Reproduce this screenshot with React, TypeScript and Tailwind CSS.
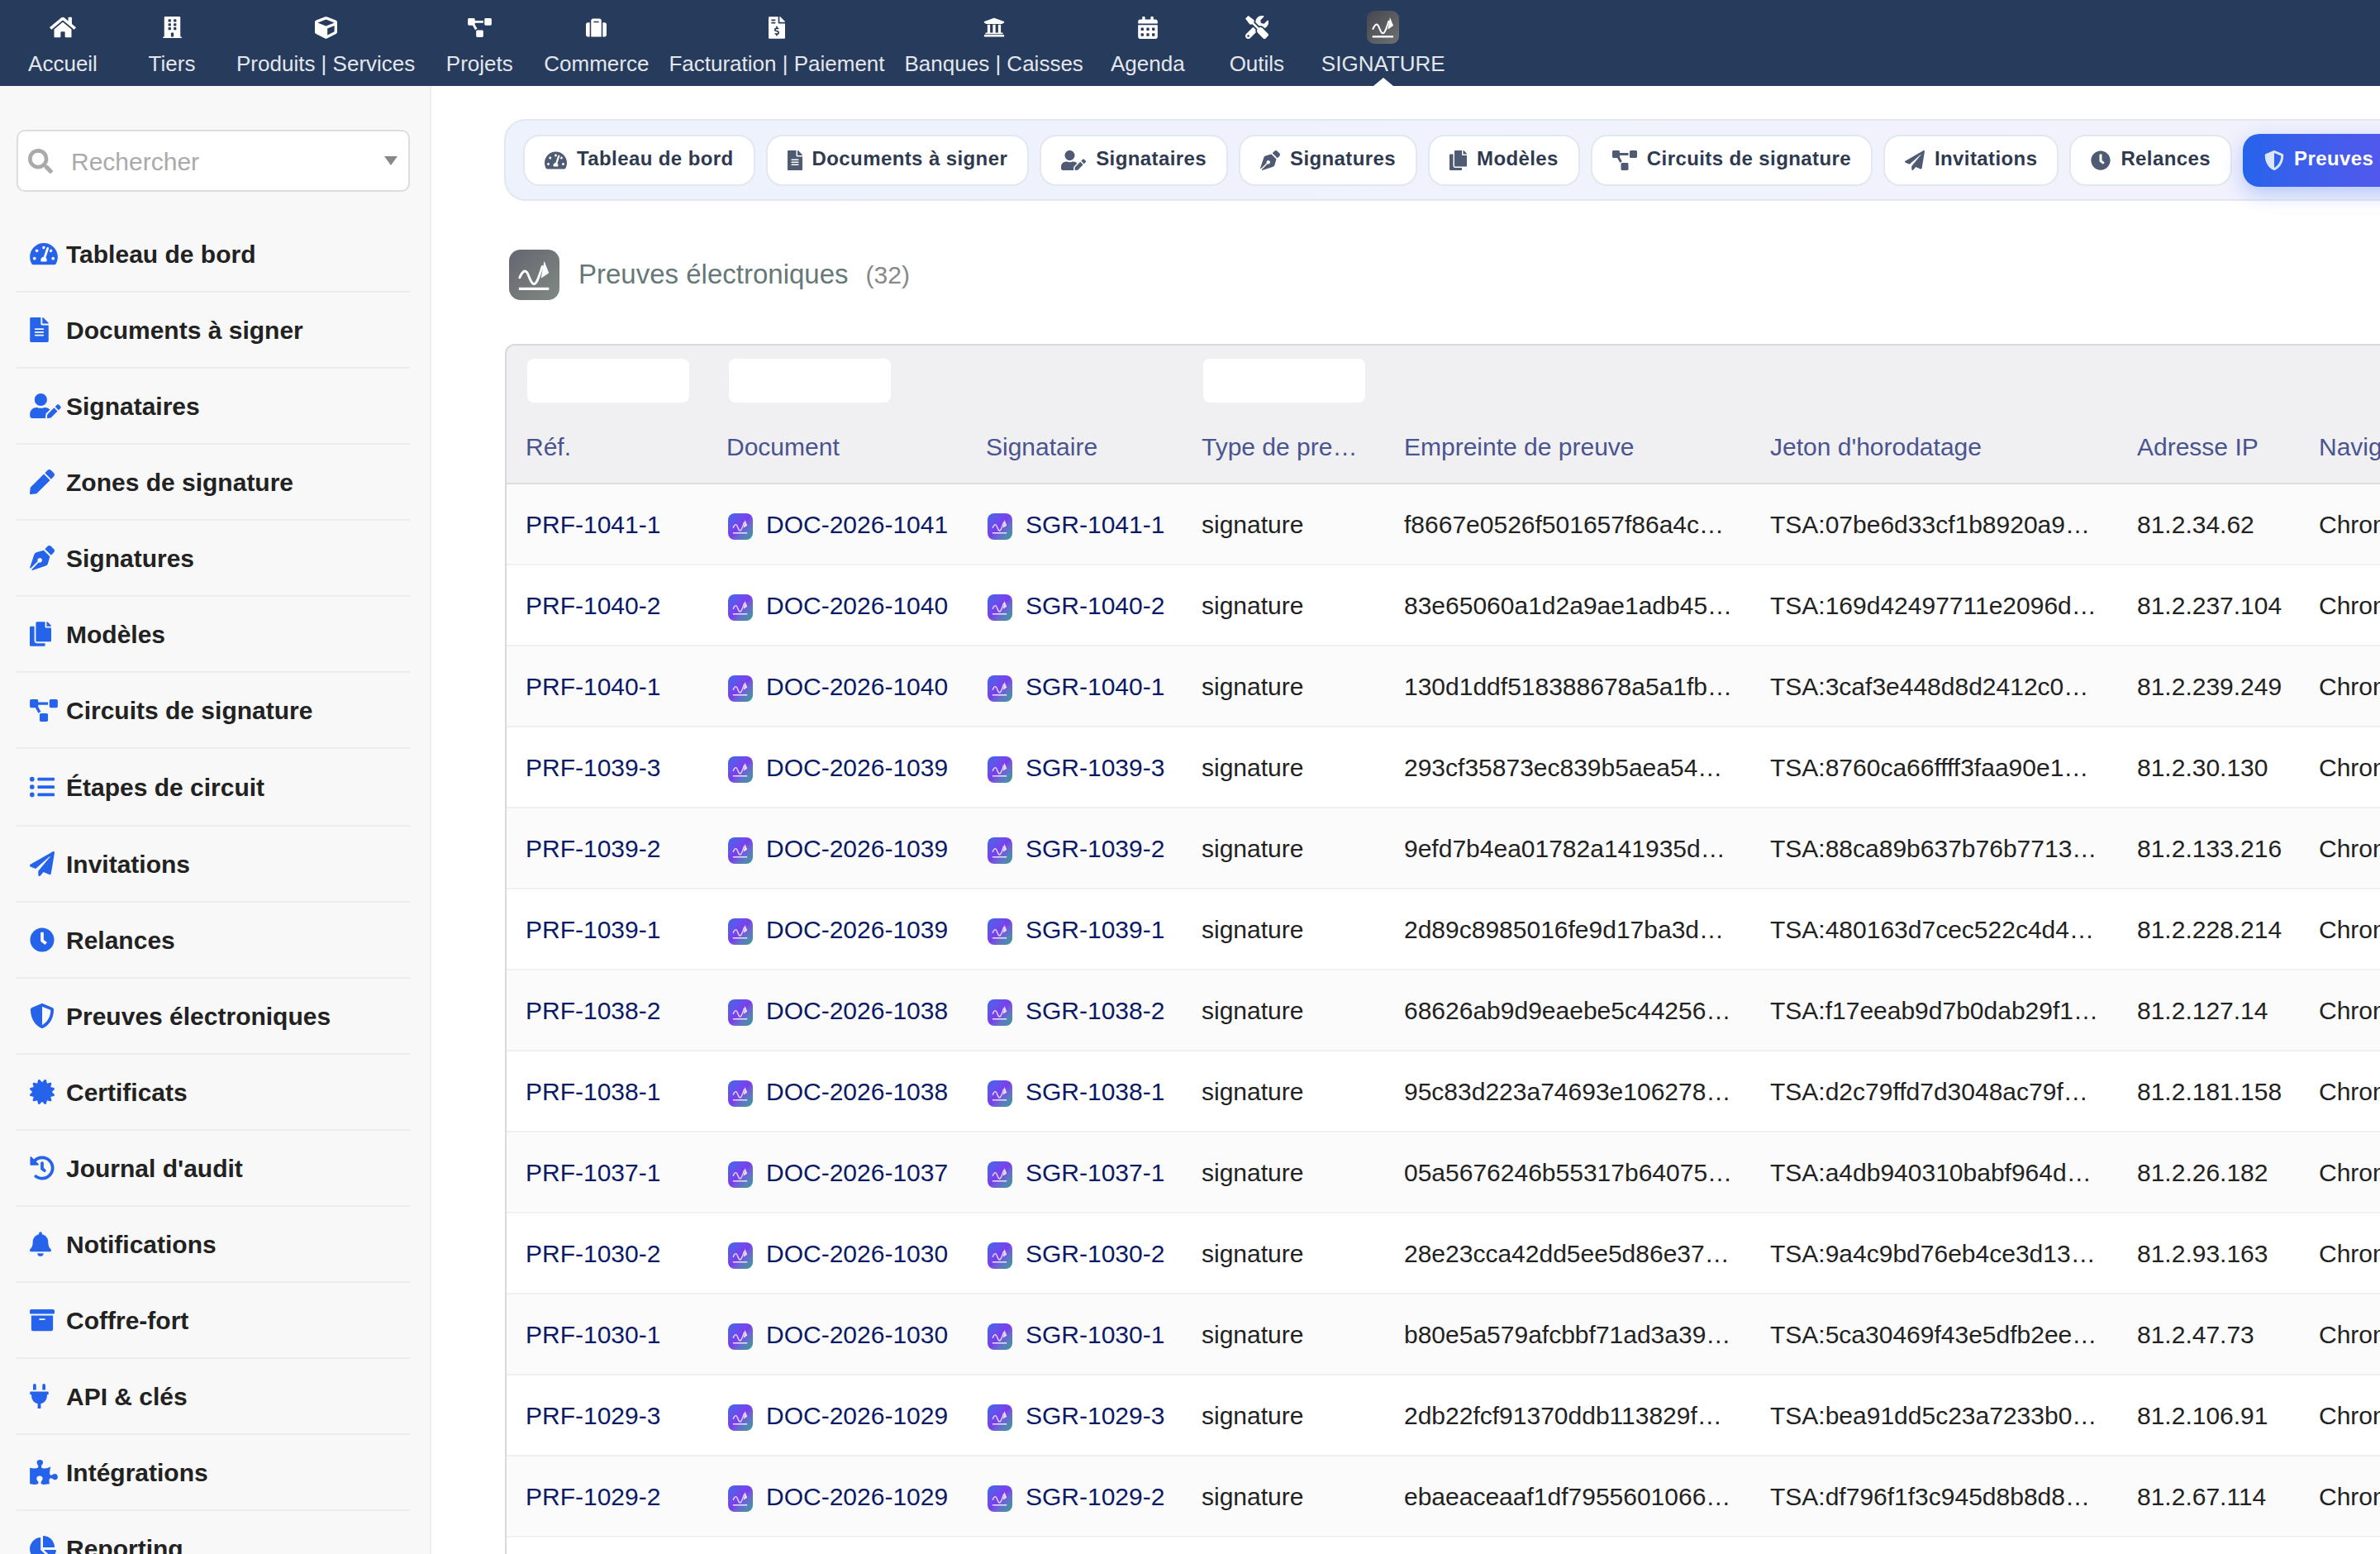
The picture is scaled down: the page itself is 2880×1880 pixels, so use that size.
import React from 'react';
import type { IconType } from 'react-icons';
import {
  FaArchive,
  FaBell,
  FaBuilding,
  FaCalendarAlt,
  FaCertificate,
  FaChartPie,
  FaClock,
  FaCopy,
  FaCube,
  FaFileAlt,
  FaFileInvoiceDollar,
  FaHistory,
  FaHome,
  FaListUl,
  FaPaperPlane,
  FaPen,
  FaPenNib,
  FaPlug,
  FaProjectDiagram,
  FaPuzzlePiece,
  FaSearch,
  FaShieldAlt,
  FaSuitcase,
  FaTachometerAlt,
  FaTools,
  FaUniversity,
  FaUserEdit,
} from 'react-icons/fa';

const topMenu: { label: string; icon: IconType; size: string }[] = [
  { label: 'Accueil', icon: FaHome, size: 'h-[28px] w-[32px]' },
  { label: 'Tiers', icon: FaBuilding, size: 'h-[26px] w-[23px]' },
  { label: 'Produits | Services', icon: FaCube, size: 'h-[27px] w-[27px]' },
  { label: 'Projets', icon: FaProjectDiagram, size: 'h-[23px] w-[29px]' },
  { label: 'Commerce', icon: FaSuitcase, size: 'h-[25px] w-[25px]' },
  { label: 'Facturation | Paiement', icon: FaFileInvoiceDollar, size: 'h-[27px] w-[20px]' },
  { label: 'Banques | Caisses', icon: FaUniversity, size: 'h-[26px] w-[26px]' },
  { label: 'Agenda', icon: FaCalendarAlt, size: 'h-[27px] w-[24px]' },
  { label: 'Outils', icon: FaTools, size: 'h-[28px] w-[28px]' },
];

const tabs: { label: string; icon: IconType; size: string; active?: boolean }[] = [
  { label: 'Tableau de bord', icon: FaTachometerAlt, size: 'h-[24px] w-[27px]' },
  { label: 'Documents à signer', icon: FaFileAlt, size: 'h-[24px] w-[18px]' },
  { label: 'Signataires', icon: FaUserEdit, size: 'h-[24px] w-[30px]' },
  { label: 'Signatures', icon: FaPenNib, size: 'h-[24px] w-[24px]' },
  { label: 'Modèles', icon: FaCopy, size: 'h-[24px] w-[21px]' },
  { label: 'Circuits de signature', icon: FaProjectDiagram, size: 'h-[24px] w-[30px]' },
  { label: 'Invitations', icon: FaPaperPlane, size: 'h-[24px] w-[24px]' },
  { label: 'Relances', icon: FaClock, size: 'h-[24px] w-[24px]' },
  { label: 'Preuves électroniques', icon: FaShieldAlt, size: 'h-[24px] w-[24px]', active: true },
];

const sideMenu: { label: string; icon: IconType; size: string; tall?: boolean }[] = [
  { label: 'Tableau de bord', icon: FaTachometerAlt, size: 'h-[30px] w-[34px]' },
  { label: 'Documents à signer', icon: FaFileAlt, size: 'h-[30px] w-[23px]' },
  { label: 'Signataires', icon: FaUserEdit, size: 'h-[30px] w-[38px]' },
  { label: 'Zones de signature', icon: FaPen, size: 'h-[30px] w-[30px]' },
  { label: 'Signatures', icon: FaPenNib, size: 'h-[30px] w-[30px]' },
  { label: 'Modèles', icon: FaCopy, size: 'h-[30px] w-[26px]' },
  { label: 'Circuits de signature', icon: FaProjectDiagram, size: 'h-[27px] w-[34px]' },
  { label: 'Étapes de circuit', icon: FaListUl, size: 'h-[30px] w-[30px]', tall: true },
  { label: 'Invitations', icon: FaPaperPlane, size: 'h-[30px] w-[30px]' },
  { label: 'Relances', icon: FaClock, size: 'h-[30px] w-[30px]' },
  { label: 'Preuves électroniques', icon: FaShieldAlt, size: 'h-[30px] w-[30px]' },
  { label: 'Certificats', icon: FaCertificate, size: 'h-[30px] w-[30px]' },
  { label: "Journal d'audit", icon: FaHistory, size: 'h-[30px] w-[30px]' },
  { label: 'Notifications', icon: FaBell, size: 'h-[30px] w-[26px]' },
  { label: 'Coffre-fort', icon: FaArchive, size: 'h-[30px] w-[30px]' },
  { label: 'API & clés', icon: FaPlug, size: 'h-[30px] w-[23px]' },
  { label: 'Intégrations', icon: FaPuzzlePiece, size: 'h-[30px] w-[34px]' },
  { label: 'Reporting', icon: FaChartPie, size: 'h-[30px] w-[32px]' },
];

const proofs = [
  ['1041-1', 'f8667e0526f501657f86a4c…', 'TSA:07be6d33cf1b8920a9…', '81.2.34.62'],
  ['1040-2', '83e65060a1d2a9ae1adb45…', 'TSA:169d42497711e2096d…', '81.2.237.104'],
  ['1040-1', '130d1ddf518388678a5a1fb…', 'TSA:3caf3e448d8d2412c0…', '81.2.239.249'],
  ['1039-3', '293cf35873ec839b5aea54…', 'TSA:8760ca66ffff3faa90e1…', '81.2.30.130'],
  ['1039-2', '9efd7b4ea01782a141935d…', 'TSA:88ca89b637b76b7713…', '81.2.133.216'],
  ['1039-1', '2d89c8985016fe9d17ba3d…', 'TSA:480163d7cec522c4d4…', '81.2.228.214'],
  ['1038-2', '68626ab9d9eaebe5c44256…', 'TSA:f17eeab9d7b0dab29f1…', '81.2.127.14'],
  ['1038-1', '95c83d223a74693e106278…', 'TSA:d2c79ffd7d3048ac79f…', '81.2.181.158'],
  ['1037-1', '05a5676246b55317b64075…', 'TSA:a4db940310babf964d…', '81.2.26.182'],
  ['1030-2', '28e23cca42dd5ee5d86e37…', 'TSA:9a4c9bd76eb4ce3d13…', '81.2.93.163'],
  ['1030-1', 'b80e5a579afcbbf71ad3a39…', 'TSA:5ca30469f43e5dfb2ee…', '81.2.47.73'],
  ['1029-3', '2db22fcf91370ddb113829f…', 'TSA:bea91dd5c23a7233b0…', '81.2.106.91'],
  ['1029-2', 'ebaeaceaaf1df7955601066…', 'TSA:df796f1f3c945d8b8d8…', '81.2.67.114'],
];

const headers = ['Réf.', 'Document', 'Signataire', 'Type de pre…', 'Empreinte de preuve', "Jeton d'horodatage", 'Adresse IP', 'Navigateur'];

const colWidths = ['w-[243px]', 'w-[314px]', 'w-[261px]', 'w-[245px]', 'w-[443px]', 'w-[444px]', 'w-[220px]', 'w-[400px]'];

const SignatureMark: React.FC<{ className?: string }> = ({ className }) => (
  <svg viewBox="0 0 24 24" className={className} fill="none" stroke="#fff" strokeWidth="1.5">
    <path d="M2.5 13.5C4 10 5.5 8.5 7 10c1.5 2 2.5 7.5 4.5 7.5S15 12 16.8 6.5" strokeLinecap="round" />
    <path d="M18 3l3 7.5-5 3.5z" fill="#fff" stroke="none" />
    <path d="M2 20.5h19" strokeWidth="1.7" />
  </svg>
);

const RefIcon: React.FC = () => (
  <span className="ml-[2px] mt-[6px] flex h-[32px] w-[30px] shrink-0 items-center justify-center rounded-[8px] bg-linear-to-br from-[#3568ea] via-[#7a3cec] to-[#1d9f8d]">
    <SignatureMark className="h-[22px] w-[22px] opacity-80" />
  </span>
);

const tdClass = 'h-[98px] overflow-hidden whitespace-nowrap border-b-2 border-[#f0f0f0] px-[23px] align-middle text-[30px] text-[#222]';

export default function App() {
  return (
    <div className="flex h-screen w-full flex-col overflow-hidden bg-white font-['Liberation_Sans',Arial,sans-serif]">
      <header className="flex h-[104px] shrink-0 bg-[#273b5c] pl-[10px]">
        {topMenu.map(({ label, icon: Icon, size }) => (
          <div key={label} className="flex h-full min-w-[132px] flex-col items-center px-[12px]">
            <div className="flex h-[66px] items-center text-white">
              <Icon className={size} />
            </div>
            <span className="whitespace-nowrap text-[26px] leading-[22px] text-[#e3e7ec]">{label}</span>
          </div>
        ))}
        <div className="relative flex h-full min-w-[132px] flex-col items-center px-[12px]">
          <div className="flex h-[66px] items-center">
            <span className="flex h-[40px] w-[39px] items-center justify-center rounded-[9px] bg-linear-to-br from-[#45474f] to-[#6f7172]">
              <SignatureMark className="h-[32px] w-[32px]" />
            </span>
          </div>
          <span className="whitespace-nowrap text-[26px] leading-[22px] text-[#e3e7ec]">SIGNATURE</span>
          <span className="absolute bottom-0 left-1/2 h-0 w-0 -translate-x-1/2 border-x-[12px] border-b-[10px] border-x-transparent border-b-white" />
        </div>
      </header>

      <div className="flex min-h-0 flex-1">
        <aside className="w-[522px] shrink-0 overflow-hidden border-r-2 border-[#eeeeee] bg-[#f8f8f8] px-[20px] pt-[53px]">
          <div className="flex h-[75px] w-[476px] items-center rounded-[10px] border-2 border-[#dddddd] bg-white pl-[12px] pr-[13px]">
            <FaSearch className="h-[30px] w-[30px] text-[#aaaaaa]" />
            <span className="ml-[22px] flex-1 pt-[2px] text-[30px] text-[#aaaaaa]">Rechercher</span>
            <span className="h-0 w-0 border-x-[8px] border-t-[11px] border-x-transparent border-t-[#888888]" />
          </div>
          <nav className="mt-[30px] w-[476px]">
            {sideMenu.map(({ label, icon: Icon, size, tall }) => (
              <div
                key={label}
                className={`flex items-center border-b-2 border-[#ececec] pl-[16px] ${tall ? 'h-[94px]' : 'h-[92px]'}`}
              >
                <span className="flex w-[44px] shrink-0 text-[#2563eb]">
                  <Icon className={`shrink-0 ${size}`} />
                </span>
                <span className="whitespace-nowrap text-[30px] font-bold text-[#222222]">{label}</span>
              </div>
            ))}
          </nav>
        </aside>

        <main className="min-w-0 flex-1 overflow-hidden pl-[88px] pt-[40px]">
          <div className="flex h-[99px] w-[3100px] items-center gap-[13px] rounded-[26px] border-2 border-[#e2e8f0] bg-linear-to-r from-[#edf2fc] to-[#f4f2fd] pl-[21px]">
            {tabs.map(({ label, icon: Icon, size, active }) => (
              <div
                key={label}
                className={
                  active
                    ? 'flex h-[64px] items-center gap-[12px] rounded-[20px] bg-linear-to-r from-[#2563eb] to-[#6d4aec] px-[26px] text-[24px] font-bold tracking-[0.4px] text-white shadow-[0_8px_24px_rgba(37,99,235,0.3)]'
                    : 'flex h-[62px] items-center gap-[12px] rounded-[20px] border-2 border-[#e2e8f0] bg-white px-[24px] text-[24px] font-bold tracking-[0.4px] text-[#2f3a4f]'
                }
              >
                <span className={active ? 'text-[#dbe6ff]' : 'text-[#4f5b72]'}>
                  <Icon className={size} />
                </span>
                <span className="whitespace-nowrap pb-[3px]">{label}</span>
              </div>
            ))}
          </div>

          <div className="ml-[6px] mt-[59px] flex h-[61px] items-center">
            <span className="flex h-[61px] w-[61px] items-center justify-center rounded-[14px] bg-linear-to-br from-[#656570] to-[#808a82]">
              <SignatureMark className="h-[46px] w-[46px]" />
            </span>
            <span className="ml-[23px] pb-[2px] text-[33px] text-[#667878]">Preuves électroniques</span>
            <span className="ml-[21px] text-[30px] text-[#888888]">(32)</span>
          </div>

          <div className="ml-[1px] mt-[53px] w-[2572px] rounded-tl-[12px] border-l-2 border-t-2 border-[#d9d9d9]">
            <table className="w-[2570px] table-fixed border-separate border-spacing-0">
              <colgroup>
                {colWidths.map((w, i) => (
                  <col key={i} className={w} />
                ))}
              </colgroup>
              <thead className="bg-[#f0f0f2]">
                <tr className="h-[80px]">
                  <td className="rounded-tl-[10px] px-[25px] pt-[16px] align-top">
                    <div className="h-[53px] w-[196px] rounded-[8px] bg-white" />
                  </td>
                  <td className="px-[26px] pt-[16px] align-top">
                    <div className="h-[53px] w-[196px] rounded-[8px] bg-white" />
                  </td>
                  <td />
                  <td className="px-[25px] pt-[16px] align-top">
                    <div className="h-[53px] w-[196px] rounded-[8px] bg-white" />
                  </td>
                  <td colSpan={4} />
                </tr>
                <tr className="h-[88px]">
                  {headers.map((h) => (
                    <th
                      key={h}
                      className="overflow-hidden whitespace-nowrap border-b-2 border-[#dddddd] px-[23px] pb-[2px] text-left text-[30px] font-normal text-[#4a5490]"
                    >
                      {h}
                    </th>
                  ))}
                </tr>
              </thead>
              <tbody>
                {proofs.map(([id, hash, token, ip], i) => {
                  const doc = id.split('-')[0];
                  return (
                    <tr key={id} className={i % 2 === 0 ? 'bg-[#fbfbfb]' : 'bg-white'}>
                      <td className={tdClass}>
                        <span className="text-[#0b1a66]">PRF-{id}</span>
                      </td>
                      <td className={tdClass}>
                        <span className="flex items-center gap-[16px] text-[#0b1a66]">
                          <RefIcon />
                          DOC-2026-{doc}
                        </span>
                      </td>
                      <td className={tdClass}>
                        <span className="flex items-center gap-[16px] text-[#0b1a66]">
                          <RefIcon />
                          SGR-{id}
                        </span>
                      </td>
                      <td className={tdClass}>signature</td>
                      <td className={tdClass}>{hash}</td>
                      <td className={tdClass}>{token}</td>
                      <td className={tdClass}>{ip}</td>
                      <td className={tdClass}>Chrome</td>
                    </tr>
                  );
                })}
                <tr>
                  <td colSpan={8} className="h-[98px]" />
                </tr>
              </tbody>
            </table>
          </div>
        </main>
      </div>
    </div>
  );
}
